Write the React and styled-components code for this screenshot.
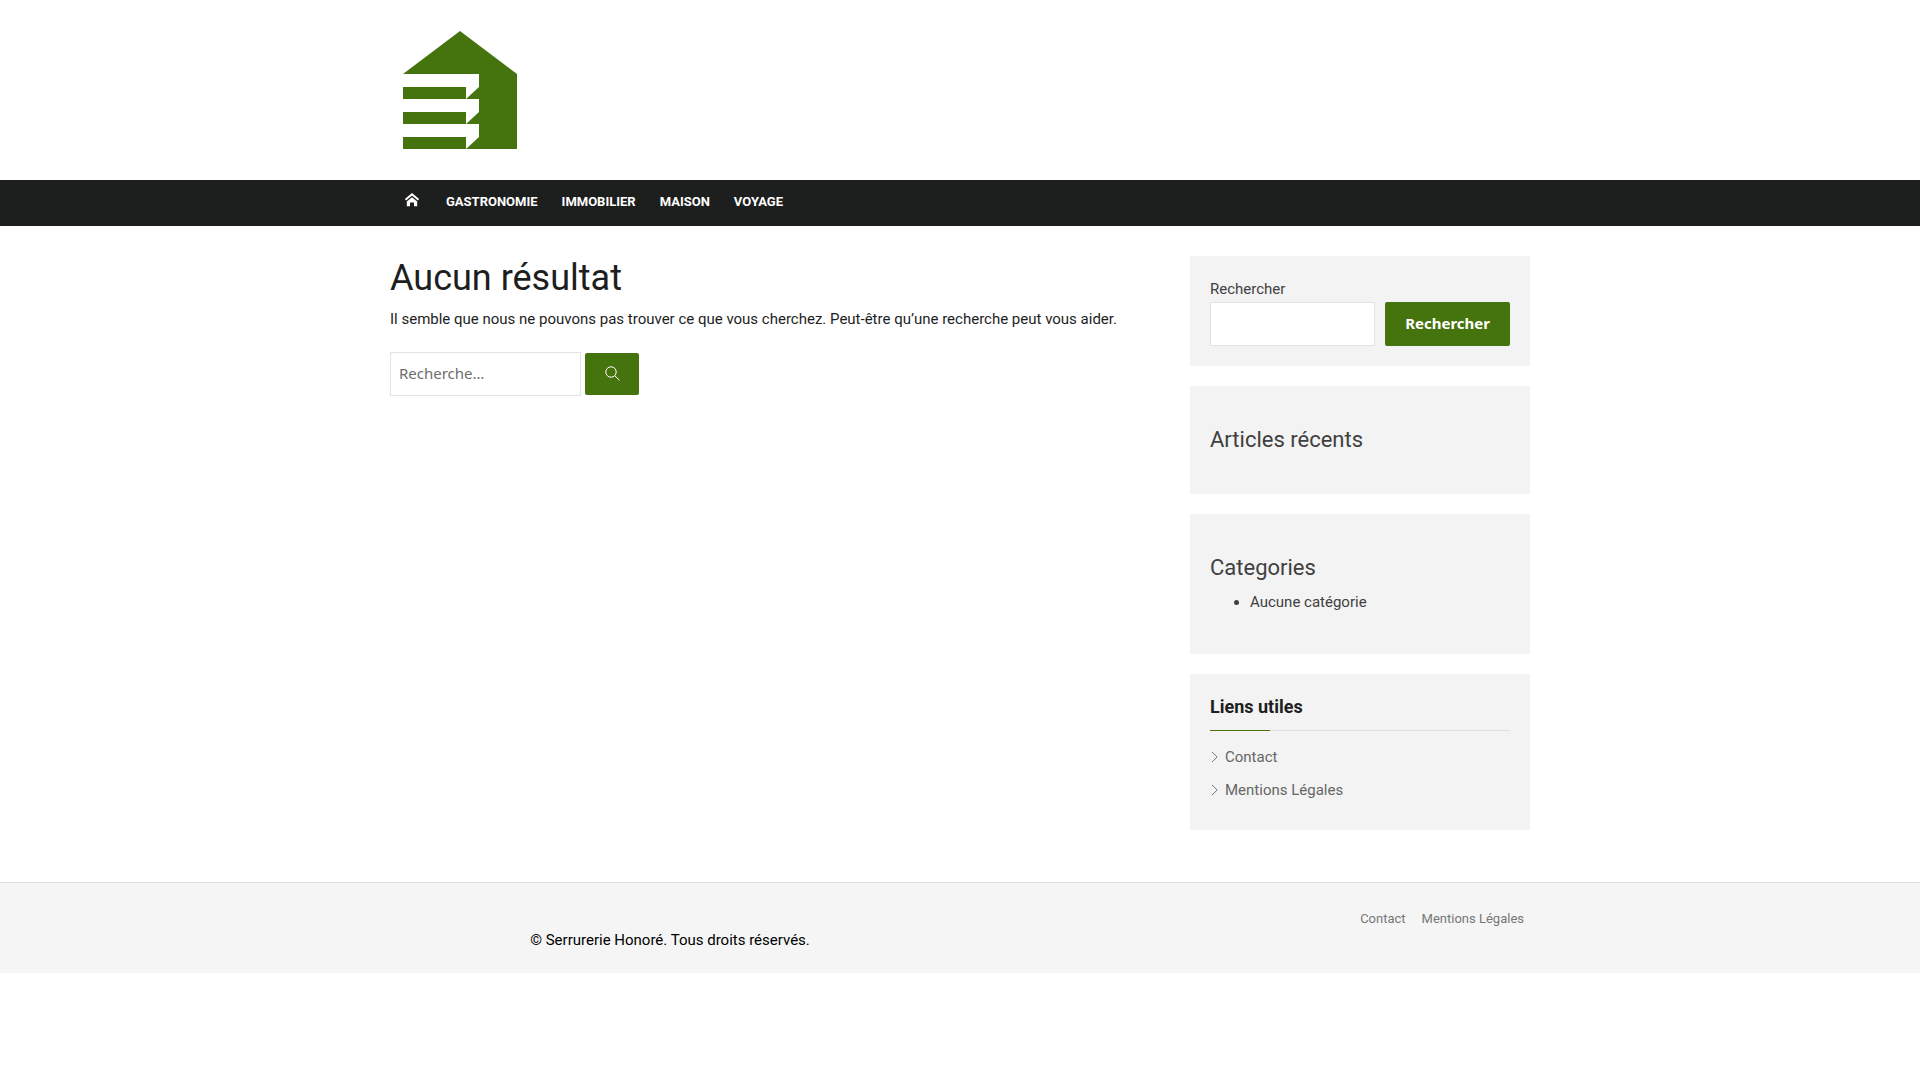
import React from "react";
import styled, { createGlobalStyle } from "styled-components";

const navLinks = ["Gastronomie", "Immobilier", "Maison", "Voyage"];
const usefulLinks = ["Contact", "Mentions Légales"];

export default function App() {
  return (
    <>
      <GlobalStyle />
      <Header>
        <HeaderInner>
          <a href="#" aria-label="Serrurerie Honoré">
            <Logo />
          </a>
        </HeaderInner>
      </Header>
      <NavBar>
        <Container>
          <NavList>
            <li>
              <NavLink href="#" aria-label="Accueil">
                <HomeIcon />
              </NavLink>
            </li>
            {navLinks.map((label) => (
              <li key={label}>
                <NavLink href="#">{label}</NavLink>
              </li>
            ))}
          </NavList>
        </Container>
      </NavBar>
      <Content>
        <Main>
          <PageTitle>Aucun résultat</PageTitle>
          <Intro>
            Il semble que nous ne pouvons pas trouver ce que vous cherchez. Peut-être qu’une recherche peut vous aider.
          </Intro>
          <SearchForm role="search" onSubmit={(e) => e.preventDefault()}>
            <SearchInput type="search" placeholder="Recherche…" aria-label="Recherche" />
            <IconButton type="submit" aria-label="Rechercher">
              <SearchIcon />
            </IconButton>
          </SearchForm>
        </Main>
        <Sidebar>
          <Widget>
            <form role="search" onSubmit={(e) => e.preventDefault()}>
              <Label htmlFor="widget-search">Rechercher</Label>
              <WidgetRow>
                <WidgetInput id="widget-search" type="search" />
                <SubmitButton type="submit">Rechercher</SubmitButton>
              </WidgetRow>
            </form>
          </Widget>
          <Widget>
            <Group>
              <GroupTitle>Articles récents</GroupTitle>
            </Group>
          </Widget>
          <Widget>
            <Group>
              <GroupTitle>Categories</GroupTitle>
              <CategoryList>
                <li>Aucune catégorie</li>
              </CategoryList>
            </Group>
          </Widget>
          <Widget>
            <WidgetTitle>Liens utiles</WidgetTitle>
            <LinkList>
              {usefulLinks.map((label) => (
                <li key={label}>
                  <ChevronIcon />
                  <a href="#">{label}</a>
                </li>
              ))}
            </LinkList>
          </Widget>
        </Sidebar>
      </Content>
      <Footer>
        <FooterInner>
          <Copyright>© Serrurerie Honoré. Tous droits réservés.</Copyright>
          <FooterNav>
            {usefulLinks.map((label) => (
              <a key={label} href="#">
                {label}
              </a>
            ))}
          </FooterNav>
        </FooterInner>
      </Footer>
    </>
  );
}

function Logo() {
  return (
    <svg width="140" height="140" viewBox="0 0 140 140" fill="#45730e" aria-hidden="true">
      <path d="M70 11 127 54V129H76L89 117V104H76L89 92V79H76L89 67V54H13Z" />
      <path d="M13 67H76V79H13ZM13 92H76V104H13ZM13 117H76V129H13Z" />
    </svg>
  );
}

function HomeIcon() {
  return (
    <svg width="20" height="20" viewBox="0 0 20 20" aria-hidden="true">
      <path d="M3.5 7.8 10 2.3 16.5 7.8" fill="none" stroke="#fff" strokeWidth="2" />
      <path d="M10 5.2 15.2 9.6V14.2H12V10.4H8V14.2H4.8V9.6Z" fill="#fff" />
    </svg>
  );
}

function SearchIcon() {
  return (
    <svg width="15" height="15" viewBox="0 0 15 15" fill="none" stroke="#fff" strokeWidth="1" aria-hidden="true">
      <circle cx="6" cy="6" r="5.2" />
      <path d="M9.8 9.8 14.5 14.3" />
    </svg>
  );
}

function ChevronIcon() {
  return (
    <svg width="15" height="12" viewBox="0 0 15 12" fill="none" stroke="#777" strokeWidth="1" aria-hidden="true">
      <path d="M2 1 7.2 6 2 11" />
    </svg>
  );
}

const GlobalStyle = createGlobalStyle`
  * {
    box-sizing: border-box;
  }
  body {
    margin: 0;
    background: #fff;
    color: #1d1e1e;
    font-family: Roboto, sans-serif;
    font-size: 15px;
    line-height: 26px;
  }
  a {
    color: inherit;
    text-decoration: none;
  }
  svg {
    display: block;
  }
  ul, h1, h2, h3, p {
    margin: 0;
    padding: 0;
  }
`;
const Container = styled.div`
  width: 100%;
  max-width: 1140px;
  margin: 0 auto;
`;
const Header = styled.header`
  padding: 20px 0;
`;
const HeaderInner = styled(Container)`
  display: flex;
`;
const NavBar = styled.nav`
  background: #1d1e1e;
`;
const NavList = styled.ul`
  display: flex;
  flex-wrap: wrap;
  list-style: none;
`;
const NavLink = styled.a`
  display: flex;
  align-items: center;
  height: 46px;
  padding: 0 12px 2px;
  color: #fff;
  font-size: 13px;
  font-weight: 700;
  text-transform: uppercase;
`;
const Content = styled(Container)`
  display: grid;
  grid-template-columns: minmax(0, 1fr) 340px;
  gap: 30px;
  padding: 30px 0 52px;
  @media (max-width: 960px) {
    grid-template-columns: 1fr;
    padding: 30px 20px;
  }
`;
const Main = styled.main`
  min-width: 0;
`;
const PageTitle = styled.h1`
  margin-bottom: 5px;
  font-size: 36px;
  font-weight: 400;
  line-height: 45px;
`;
const Intro = styled.p`
  margin-bottom: 20px;
`;
const SearchForm = styled.form`
  display: flex;
  align-items: center;
  gap: 4px;
`;
const SearchInput = styled.input`
  width: 191px;
  height: 44px;
  padding: 0 8px 2px;
  border: 1px solid #e3e3e3;
  border-radius: 0;
  background: #fff;
  font-family: "Noto Sans", sans-serif;
  font-size: 15px;
  appearance: none;
  &::placeholder {
    color: #6d6d6d;
  }
`;
const Button = styled.button`
  border: 0;
  border-radius: 2px;
  background: #45730e;
  color: #fff;
  cursor: pointer;
`;
const IconButton = styled(Button)`
  display: flex;
  align-items: center;
  justify-content: center;
  width: 54px;
  height: 42px;
  padding: 0 0 2px;
`;
const Sidebar = styled.aside`
  display: flex;
  flex-direction: column;
  gap: 20px;
`;
const Widget = styled.section`
  padding: 20px;
  background: #f3f3f3;
  color: #404040;
`;
const Label = styled.label`
  display: block;
`;
const WidgetRow = styled.div`
  display: flex;
  gap: 10px;
`;
const WidgetInput = styled(SearchInput)`
  flex: 1;
  width: auto;
  min-width: 0;
`;
const SubmitButton = styled(Button)`
  padding: 0 20px 2px;
  font-family: "Noto Sans", sans-serif;
  font-size: 15px;
  font-weight: 700;
`;
const Group = styled.div`
  padding: 20px 0;
`;
const GroupTitle = styled.h2`
  font-size: 22px;
  font-weight: 400;
  line-height: 28px;
`;
const CategoryList = styled.ul`
  margin-top: 8px;
  padding-left: 40px;
  line-height: 24px;
`;
const WidgetTitle = styled.h3`
  position: relative;
  margin-bottom: 13px;
  padding-bottom: 10px;
  border-bottom: 1px solid #dfdfdf;
  color: #1d1e1e;
  font-size: 18px;
  font-weight: 700;
  &::after {
    content: "";
    position: absolute;
    left: 0;
    bottom: -1px;
    width: 60px;
    height: 1px;
    background: #45730e;
  }
`;
const LinkList = styled.ul`
  list-style: none;
  color: #666;
  li {
    display: flex;
    align-items: center;
    padding-bottom: 7px;
  }
`;
const Footer = styled.footer`
  border-top: 1px solid #dfdfdf;
  background: #f5f5f5;
`;
const FooterInner = styled(Container)`
  display: grid;
  grid-template-columns: 1fr 1fr;
  gap: 20px;
  padding: 23px 0 20px;
`;
const Copyright = styled.p`
  padding-top: 21px;
  color: #000;
  text-align: center;
`;
const FooterNav = styled.nav`
  display: flex;
  justify-content: flex-end;
  gap: 16px;
  padding-right: 6px;
  color: #777;
  font-size: 13px;
`;
